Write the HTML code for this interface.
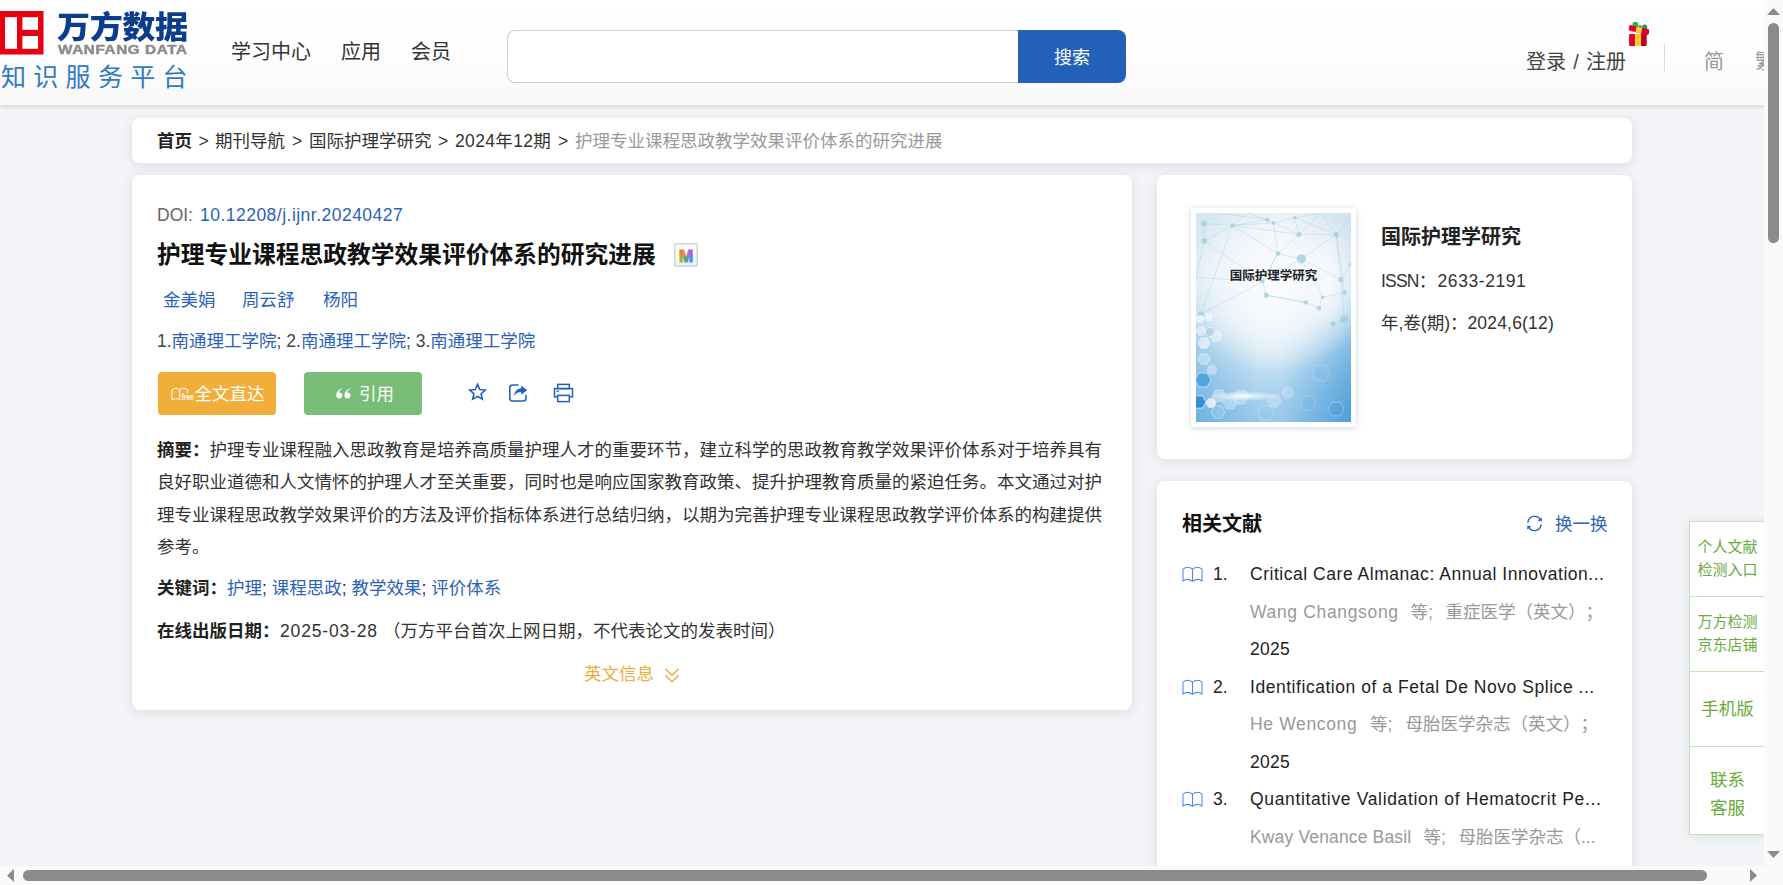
<!DOCTYPE html>
<html lang="zh-CN">
<head>
<meta charset="utf-8">
<title>护理专业课程思政教学效果评价体系的研究进展</title>
<style>
*{box-sizing:border-box;margin:0;padding:0}
html,body{width:1783px;height:885px;overflow:hidden}
body{text-spacing-trim:space-all;background:#f2f4f8;font-family:"Liberation Sans","Noto Sans CJK SC",sans-serif;font-size:17.5px;color:#333;position:relative}
a{text-decoration:none;color:inherit}
.abs{position:absolute}
/* header */
#hdr{position:absolute;left:0;top:0;width:1764px;height:105px;background:linear-gradient(#ffffff 0%,#fefefe 45%,#f8f8f8 100%);box-shadow:0 1px 5px rgba(40,50,65,.2)}
.nav{position:absolute;top:39px;font-size:20px;line-height:26px;color:#333;white-space:nowrap}
#sbox{position:absolute;left:507px;top:30px;width:512px;height:53px;border:1px solid #cfcfcf;border-right:none;border-radius:8px 0 0 8px;background:#fff}
#sbtn{position:absolute;left:1018px;top:30px;width:108px;height:53px;background:#2260b9;border-radius:0 8px 8px 0;color:#fff;font-size:18px;line-height:56px;text-align:center}
/* cards */
.card{position:absolute;background:#fff;border-radius:8px;box-shadow:0 2px 12px rgba(0,0,0,.1)}
.t{position:absolute;white-space:nowrap;line-height:26px}
.blue{color:#2b62b8}
.b{font-weight:bold}
.rl{color:#222}.yr{letter-spacing:.3px}.rg{color:#999}
/* scrollbars */
#vsb{position:absolute;left:1764px;top:0;width:19px;height:866px;background:#fafafa}
#hsb{position:absolute;left:0;top:866px;width:1783px;height:19px;background:#fafafa}
.thumb{position:absolute;background:#8b8b8b;border-radius:6px}
</style>
</head>
<body>

<!-- HEADER -->
<div id="hdr">
  <!-- logo -->
  <svg class="abs" style="left:0;top:11px" width="44" height="44" viewBox="0 0 44 44">
    <rect x="0" y="0" width="43.5" height="43.5" fill="#e60012"/>
    <rect x="5" y="6.2" width="12" height="31.6" fill="#fff"/>
    <rect x="22.4" y="6.2" width="15.6" height="12.6" fill="#fff"/>
    <rect x="22.4" y="25" width="15.6" height="12.8" fill="#fff"/>
  </svg>
  <div class="t" id="lg1" style="left:56.5px;top:10.6px;font-size:33px;line-height:36px;font-weight:900;color:#0c3c8c;letter-spacing:-.5px;transform:scale(1.005,.925);transform-origin:0 0">万方数据</div>
  <div class="t" id="lg2" style="left:57.5px;top:42.2px;font-size:13px;line-height:16px;font-weight:bold;color:#8c8c8c;letter-spacing:.55px;-webkit-text-stroke:.5px #8c8c8c;transform:scaleX(1.17);transform-origin:0 0">WANFANG DATA</div>
  <div class="t" id="lg3" style="left:1px;top:62px;font-size:25px;line-height:30px;color:#2f7ac3;letter-spacing:7.3px">知识服务平台</div>

  <div class="nav" style="left:231px">学习中心</div>
  <div class="nav" style="left:341px">应用</div>
  <div class="nav" style="left:411px">会员</div>

  <div id="sbox"></div>
  <div id="sbtn">搜索</div>

  <div class="t" id="login" style="left:1526px;top:48.5px;font-size:20px;color:#444;word-spacing:1.65px">登录 / 注册</div>
<svg class="abs" style="left:1626px;top:20px" width="26" height="28" viewBox="0 0 26 28">
    <circle cx="9.4" cy="4.7" r="3" fill="#1db954"/><circle cx="18.7" cy="7.2" r="2.6" fill="#12a350"/><circle cx="14" cy="6.6" r="1.6" fill="#16a850"/>
    <rect x="3.1" y="14" width="8.9" height="12" rx="1.2" fill="#e60026"/><rect x="12" y="14" width="8.7" height="12" rx="1.2" fill="#c1001f"/>
    <rect x="8.9" y="14" width="6.1" height="12" fill="#fdd835"/><rect x="10.8" y="14" width="2.3" height="12" fill="#fbc02d"/>
    <g transform="rotate(14 13 10)"><rect x="2.6" y="7.2" width="20.6" height="5.6" rx="1.8" fill="#e8002a"/><rect x="13" y="7.2" width="10.2" height="5.6" rx="1.8" fill="#d80025"/><rect x="10" y="7.2" width="5.8" height="5.6" fill="#fdd02f"/></g>
  </svg>
  <div class="abs" style="left:1664px;top:44px;width:1px;height:29px;background:#dcdcdc"></div>
  <div class="t" style="left:1704px;top:48.5px;font-size:20px;color:#999">简</div>
  <div class="t" style="left:1755px;top:48.5px;font-size:20px;color:#999;width:9px;overflow:hidden">繁</div>
</div>

<!-- BREADCRUMB -->
<div class="card" style="left:132px;top:118px;width:1500px;height:45px"></div>
<div class="t b bc" style="left:157px;top:128px;color:#222">首页</div>
<div class="t bc" style="left:198.5px;top:128px">&gt;</div>
<div class="t bc" style="left:215px;top:128px">期刊导航</div>
<div class="t bc" style="left:292px;top:128px">&gt;</div>
<div class="t bc" style="left:309px;top:128px">国际护理学研究</div>
<div class="t bc" style="left:438px;top:128px">&gt;</div>
<div class="t bc" id="bcy" style="left:455px;top:128px;letter-spacing:0.35px">2024年12期</div>
<div class="t bc" style="left:558px;top:128px">&gt;</div>
<div class="t bc" style="left:575px;top:128px;color:#999">护理专业课程思政教学效果评价体系的研究进展</div>

<!-- MAIN CARD -->
<div class="card" style="left:132px;top:175px;width:1000px;height:535px"></div>
<div class="t" id="doi" style="left:157px;top:202px"><span style="color:#666">DOI:</span><span class="blue" id="doin" style="position:absolute;left:43px;top:0;letter-spacing:0.48px">10.12208/j.ijnr.20240427</span></div>
<div class="t b" id="title" style="left:157px;top:240px;font-size:23.75px;line-height:30px;color:#111">护理专业课程思政教学效果评价体系的研究进展</div>
<!-- M icon -->
<svg class="abs" style="left:674px;top:243px" width="24" height="24" viewBox="0 0 24 24">
  <defs>
    <linearGradient id="mbg" x1="0" y1="0" x2="0" y2="1"><stop offset="0" stop-color="#fff"/><stop offset="1" stop-color="#e9f0fa"/></linearGradient>
    <linearGradient id="ml" x1="0" y1="0" x2="0" y2="1"><stop offset="0" stop-color="#f8781a"/><stop offset=".45" stop-color="#e98a2a"/><stop offset=".6" stop-color="#8fc63a"/><stop offset="1" stop-color="#86c140"/></linearGradient>
    <linearGradient id="mr" x1="0" y1="0" x2="0" y2="1"><stop offset="0" stop-color="#b458d8"/><stop offset=".4" stop-color="#9a6ae0"/><stop offset=".6" stop-color="#3f9be8"/><stop offset="1" stop-color="#3a9ce9"/></linearGradient>
    <linearGradient id="mm" x1="0" y1="0" x2="0" y2="1"><stop offset="0" stop-color="#e2705a"/><stop offset=".4" stop-color="#c98a6a"/><stop offset=".6" stop-color="#55a08c"/><stop offset="1" stop-color="#4c9c94"/></linearGradient>
    <clipPath id="mcl"><rect x="0" y="0" width="9.3" height="24"/></clipPath>
    <clipPath id="mcm"><rect x="9.3" y="0" width="5" height="24"/></clipPath>
    <clipPath id="mcr"><rect x="14.3" y="0" width="10" height="24"/></clipPath>
  </defs>
  <rect x=".75" y=".75" width="22.5" height="22.5" rx="2" fill="url(#mbg)" stroke="#d3d4d6" stroke-width="1.5"/>
  <g font-family="Liberation Sans,sans-serif" font-weight="bold" font-size="17" text-anchor="middle">
    <text x="12" y="19" fill="url(#ml)" stroke="url(#ml)" stroke-width="1.2" clip-path="url(#mcl)">M</text>
    <text x="12" y="19" fill="url(#mm)" stroke="url(#mm)" stroke-width="1.2" clip-path="url(#mcm)">M</text>
    <text x="12" y="19" fill="url(#mr)" stroke="url(#mr)" stroke-width="1.2" clip-path="url(#mcr)">M</text>
  </g>
</svg>
<div class="t blue" id="au1" style="left:163px;top:287px">金美娟</div>
<div class="t blue" id="au2" style="left:242px;top:287px">周云舒</div>
<div class="t blue" id="au3" style="left:323px;top:287px">杨阳</div>
<div class="t" id="aff" style="left:157px;top:328px;color:#444">1.<span class="blue">南通理工学院</span>; 2.<span class="blue">南通理工学院</span>; 3.<span class="blue">南通理工学院</span></div>

<div class="abs" id="btn1" style="left:158px;top:372px;width:118px;height:43px;background:#f1ae3b;border-radius:4px"></div>
<svg class="abs" style="left:171px;top:387px" width="24" height="15" viewBox="0 0 24 15" fill="none" stroke="#fff" stroke-width="1" stroke-linejoin="round">
  <path d="M1 2.6 Q4.6 -.4 8.7 2.6 Q12.8 -.4 16.4 2.6 L16.4 6 M8.7 2.6 L8.7 11.2 M1 2.6 L1 13 Q4.6 10.2 8.7 12.4 L9.8 12.2"/>
  <text x="10.4" y="13.4" font-family="Liberation Sans,sans-serif" font-size="8.8" font-weight="bold" fill="#fff" stroke="none" textLength="12.2" lengthAdjust="spacingAndGlyphs">free</text>
</svg>
<div class="t" id="btn1t" style="left:194.5px;top:380.5px;color:#fff">全文直达</div>
<div class="abs" id="btn2" style="left:304px;top:372px;width:118px;height:43px;background:#78be79;border-radius:4px"></div>
<svg class="abs" style="left:336px;top:388px" width="15" height="11" viewBox="0 0 15 11" fill="#fff">
  <path d="M6.2 0.2 C3 1.2 .3 3.9 .3 7.2 A3 3 0 1 0 3.3 4.4 C3.0 4.4 2.9 4.4 2.7 4.5 C3.2 2.9 4.6 1.8 6.4 1.1Z"/>
  <path d="M14.4 0.2 C11.2 1.2 8.5 3.9 8.5 7.2 A3 3 0 1 0 11.5 4.4 C11.2 4.4 11.1 4.4 10.9 4.5 C11.4 2.9 12.8 1.8 14.6 1.1Z"/>
</svg>
<div class="t" id="btn2t" style="left:359px;top:381px;color:#fff">引用</div>
<!-- star -->
<svg class="abs" style="left:467px;top:381px" width="21" height="21" viewBox="0 0 21 21" fill="none" stroke="#2260b9" stroke-width="1.7" stroke-linejoin="miter">
  <path transform="translate(10.5 10.8) scale(.95) translate(-10.5 -10.4)" d="M10.5 2.6 L12.9 8.0 L18.7 8.55 L14.3 12.45 L15.55 18.2 L10.5 15.2 L5.45 18.2 L6.7 12.45 L2.3 8.55 L8.1 8.0 Z"/>
</svg>
<!-- share -->
<svg class="abs" style="left:508px;top:383px" width="20" height="20" viewBox="0 0 20 20" fill="none" stroke="#2260b9" stroke-width="1.6" stroke-linecap="round">
  <path d="M10 2 H4.6 Q1.8 2 1.8 4.8 V15.2 Q1.8 18 4.6 18 H15.2 Q18 18 18 15.2 V12.6"/>
  <path d="M13.2 2.4 L19.2 7.2 L13.2 11.8 V9 C9.7 9 7.7 10.3 6.2 13 C6.6 8.3 9.3 5.5 13.2 5.3Z" fill="#2260b9" stroke="none"/>
</svg>
<!-- print -->
<svg class="abs" style="left:553px;top:383px" width="21" height="20" viewBox="0 0 21 20" fill="none" stroke="#2260b9" stroke-width="1.5">
  <rect x="4.7" y="1.4" width="11.6" height="4.2"/>
  <rect x="1.5" y="5.6" width="18" height="8.3"/>
  <rect x="4.7" y="12.4" width="11.6" height="6.2" fill="#fff"/>
  <rect x="3.4" y="7.6" width="2.6" height="1.2" fill="#2260b9" stroke="none"/>
</svg>

<div class="abs" id="abst" style="left:157px;top:433.5px;width:950px;line-height:32.5px;color:#333;text-align:left"><span class="b" style="color:#222">摘要：</span>护理专业课程融入思政教育是培养高质量护理人才的重要环节，建立科学的思政教育教学效果评价体系对于培养具有<br>良好职业道德和人文情怀的护理人才至关重要，同时也是响应国家教育政策、提升护理教育质量的紧迫任务。本文通过对护<br>理专业课程思政教学效果评价的方法及评价指标体系进行总结归纳，以期为完善护理专业课程思政教学评价体系的构建提供<br>参考。</div>
<div class="t" id="kw" style="left:157px;top:575px"><span class="b" style="color:#222">关键词：</span><span class="blue">护理</span>; <span class="blue">课程思政</span>; <span class="blue">教学效果</span>; <span class="blue">评价体系</span></div>
<div class="t" id="dt" style="left:157px;top:618px"><span class="b" style="color:#222">在线出版日期：</span><span id="dtv" style="position:absolute;left:123px;top:0;letter-spacing:0.84px">2025-03-28</span><span id="dtn" style="position:absolute;left:226px;top:0">（万方平台首次上网日期，不代表论文的发表时间）</span></div>
<div class="t" id="eng" style="left:584px;top:660.7px;color:#f0ad3c">英文信息</div>
<svg class="abs" style="left:664px;top:667px" width="16" height="16" viewBox="0 0 16 16" fill="none" stroke="#f0ad3c" stroke-width="1.5" stroke-linecap="round" stroke-linejoin="round"><path d="M1.8 2.3 L8 8.2 L14.2 2.3"/><path d="M1.8 8.8 L8 14.8 L14.2 8.8"/></svg>

<!-- RIGHT CARDS -->
<div class="card" style="left:1157px;top:175px;width:475px;height:284px"></div>
<!-- cover -->
<div class="abs" style="left:1191px;top:208px;width:165px;height:219px;background:#fff;box-shadow:0 1px 6px rgba(120,140,170,.35)"></div>
<svg class="abs" id="cover" style="left:1196px;top:213px" width="155" height="209" viewBox="0 0 155 209">
  <defs>
    <linearGradient id="cg" x1="0" y1="0" x2="0" y2="1">
      <stop offset="0" stop-color="#e1ecf3"/><stop offset=".25" stop-color="#eef3f9"/><stop offset=".48" stop-color="#eaf2f9"/><stop offset=".68" stop-color="#cde4f3"/><stop offset=".85" stop-color="#acd3ee"/><stop offset="1" stop-color="#98c9ea"/>
    </linearGradient>
    <radialGradient id="cw3" cx=".5" cy=".5" r=".5"><stop offset="0" stop-color="#fbfcfe" stop-opacity=".95"/><stop offset=".5" stop-color="#f8fafd" stop-opacity=".75"/><stop offset="1" stop-color="#fff" stop-opacity="0"/></radialGradient>
    <radialGradient id="cw2" cx=".5" cy=".5" r=".5"><stop offset="0" stop-color="#fff" stop-opacity=".95"/><stop offset="1" stop-color="#fff" stop-opacity="0"/></radialGradient>
    <linearGradient id="cr" x1="0" y1="0" x2="1" y2="0"><stop offset="0" stop-color="#4a9fd9" stop-opacity=".55"/><stop offset=".4" stop-color="#4a9fd9" stop-opacity="0"/><stop offset=".55" stop-color="#3f97d6" stop-opacity="0"/><stop offset="1" stop-color="#3f97d6" stop-opacity=".85"/></linearGradient>
    <linearGradient id="cmg" x1="0" y1="0" x2="0" y2="1"><stop offset="0" stop-color="#fff" stop-opacity=".12"/><stop offset=".35" stop-color="#fff" stop-opacity=".2"/><stop offset=".7" stop-color="#fff" stop-opacity=".7"/><stop offset="1" stop-color="#fff" stop-opacity="1"/></linearGradient>
    <mask id="cm"><rect width="155" height="209" fill="url(#cmg)"/></mask>
    <clipPath id="cc"><rect width="155" height="209"/></clipPath>
  </defs>
  <g clip-path="url(#cc)">
  <rect width="155" height="209" fill="url(#cg)"/>
  <rect width="155" height="209" fill="url(#cr)" mask="url(#cm)"/>
  <ellipse cx="82" cy="72" rx="92" ry="88" fill="url(#cw3)"/>
  <ellipse cx="132" cy="70" rx="22" ry="50" fill="url(#cw2)" opacity=".5"/>
  <ellipse cx="48" cy="183" rx="36" ry="5" fill="url(#cw2)"/>
  <g stroke="#8fc3d0" stroke-opacity=".42" stroke-width=".7" fill="none"><path d="M7.8 10.4 L36.4 12.5"/><path d="M7.8 10.4 L8.3 28.1"/><path d="M8.3 28.1 L36.4 12.5"/><path d="M36.4 12.5 L71.5 6.8"/><path d="M36.4 12.5 L77.5 9.9"/><path d="M36.4 12.5 L81.9 40.6"/><path d="M36.4 12.5 L103.0 21.3"/><path d="M71.5 6.8 L77.5 9.9"/><path d="M77.5 9.9 L81.9 40.6"/><path d="M77.5 9.9 L103.0 21.3"/><path d="M77.5 9.9 L98.8 4.7"/><path d="M81.9 40.6 L103.0 21.3"/><path d="M81.9 40.6 L105.3 45.8"/><path d="M103.0 21.3 L140.4 21.6"/><path d="M103.0 21.3 L98.8 4.7"/><path d="M105.3 45.8 L140.4 21.6"/><path d="M105.3 45.8 L144.8 66.6"/><path d="M105.3 45.8 L126.6 84.2"/><path d="M98.8 4.7 L140.4 21.6"/><path d="M140.4 21.6 L154.2 4.7"/><path d="M140.4 21.6 L124.8 0.0"/><path d="M140.4 21.6 L144.8 66.6"/><path d="M144.8 66.6 L148.7 79.6"/><path d="M144.8 66.6 L154.2 51.5"/><path d="M148.7 79.6 L126.6 84.2"/><path d="M126.6 84.2 L123.0 95.2"/><path d="M123.0 95.2 L109.7 89.4"/><path d="M109.7 89.4 L70.2 82.2"/><path d="M70.2 82.2 L66.6 68.4"/><path d="M66.6 68.4 L81.9 40.6"/><path d="M8.3 28.1 L66.6 68.4"/><path d="M8.3 28.1 L0.0 64.5"/><path d="M0.0 64.5 L66.6 68.4"/><path d="M4.7 101.4 L66.6 68.4"/><path d="M4.7 101.4 L36.4 12.5"/><path d="M52.0 0.0 L36.4 12.5"/><path d="M52.0 0.0 L71.5 6.8"/><path d="M23.4 0.0 L71.5 6.8"/><path d="M23.4 0.0 L7.8 10.4"/><path d="M124.8 0.0 L98.8 4.7"/><path d="M124.8 0.0 L103.0 21.3"/><path d="M81.9 40.6 L66.6 68.4"/><path d="M105.3 45.8 L66.6 68.4"/><path d="M70.2 82.2 L109.7 89.4"/><path d="M148.2 106.6 L144.8 66.6"/><path d="M137.0 110.8 L148.2 106.6"/><path d="M148.7 79.6 L140.4 21.6"/></g>
  <g fill="#9bcdd8" fill-opacity=".7"><circle cx="7.8" cy="10.4" r="2.8"/><circle cx="8.3" cy="28.1" r="2.8"/><circle cx="36.4" cy="12.5" r="2.2"/><circle cx="71.5" cy="6.8" r="2.2"/><circle cx="77.5" cy="9.9" r="1.8"/><circle cx="81.9" cy="40.6" r="2.4"/><circle cx="103.0" cy="21.3" r="2.6"/><circle cx="105.3" cy="45.8" r="4.6"/><circle cx="140.4" cy="21.6" r="2.6"/><circle cx="98.8" cy="4.7" r="1.8"/><circle cx="70.2" cy="82.2" r="2.6"/><circle cx="109.7" cy="89.4" r="2.2"/><circle cx="123.0" cy="95.2" r="2.4"/><circle cx="126.6" cy="84.2" r="1.8"/><circle cx="66.6" cy="68.4" r="2.0"/><circle cx="4.7" cy="101.4" r="2.8"/><circle cx="144.8" cy="66.6" r="2.6"/><circle cx="148.7" cy="79.6" r="2.4"/><circle cx="137.0" cy="110.8" r="2.6"/><circle cx="148.2" cy="106.6" r="4.0"/><circle cx="154.2" cy="51.5" r="1.6"/></g>
  <path d="M14.0 130.0 L11.0 135.2 L5.0 135.2 L2.0 130.0 L5.0 124.8 L11.0 124.8Z" fill="#fff" fill-opacity="0.55" stroke="#fff" stroke-opacity="0.7000000000000001" stroke-width=".6"/><path d="M26.0 123.0 L23.0 128.2 L17.0 128.2 L14.0 123.0 L17.0 117.8 L23.0 117.8Z" fill="#fff" fill-opacity="0.4" stroke="#fff" stroke-opacity="0.55" stroke-width=".6"/><path d="M19.0 119.0 L16.5 123.3 L11.5 123.3 L9.0 119.0 L11.5 114.7 L16.5 114.7Z" fill="#a9cdea" fill-opacity="0.6" stroke="#fff" stroke-opacity="0.75" stroke-width=".6"/><path d="M10.0 118.0 L7.5 122.3 L2.5 122.3 L0.0 118.0 L2.5 113.7 L7.5 113.7Z" fill="#fff" fill-opacity="0.5" stroke="#fff" stroke-opacity="0.65" stroke-width=".6"/><path d="M14.0 146.0 L11.0 151.2 L5.0 151.2 L2.0 146.0 L5.0 140.8 L11.0 140.8Z" fill="#cfe4f4" fill-opacity="0.6" stroke="#fff" stroke-opacity="0.75" stroke-width=".6"/><path d="M21.0 157.0 L18.5 161.3 L13.5 161.3 L11.0 157.0 L13.5 152.7 L18.5 152.7Z" fill="#fff" fill-opacity="0.35" stroke="#fff" stroke-opacity="0.5" stroke-width=".6"/><path d="M15.0 167.0 L11.0 173.9 L3.0 173.9 L-1.0 167.0 L3.0 160.1 L11.0 160.1Z" fill="#3f9ad9" fill-opacity="0.75" stroke="#fff" stroke-opacity="0.9" stroke-width=".6"/><path d="M10.0 189.0 L6.5 195.1 L-0.5 195.1 L-4.0 189.0 L-0.5 182.9 L6.5 182.9Z" fill="#2b86cf" fill-opacity="0.85" stroke="#fff" stroke-opacity="1" stroke-width=".6"/><path d="M20.0 190.0 L17.5 194.3 L12.5 194.3 L10.0 190.0 L12.5 185.7 L17.5 185.7Z" fill="#fff" fill-opacity="0.7" stroke="#fff" stroke-opacity="0.85" stroke-width=".6"/><path d="M30.0 183.0 L26.5 189.1 L19.5 189.1 L16.0 183.0 L19.5 176.9 L26.5 176.9Z" fill="#fff" fill-opacity="0.35" stroke="#fff" stroke-opacity="0.5" stroke-width=".6"/><path d="M41.0 190.0 L37.5 196.1 L30.5 196.1 L27.0 190.0 L30.5 183.9 L37.5 183.9Z" fill="#fff" fill-opacity="0.3" stroke="#fff" stroke-opacity="0.44999999999999996" stroke-width=".6"/><path d="M29.0 199.0 L25.5 205.1 L18.5 205.1 L15.0 199.0 L18.5 192.9 L25.5 192.9Z" fill="#9ccbed" fill-opacity="0.5" stroke="#fff" stroke-opacity="0.65" stroke-width=".6"/><path d="M53.0 184.0 L49.0 190.9 L41.0 190.9 L37.0 184.0 L41.0 177.1 L49.0 177.1Z" fill="#fff" fill-opacity="0.25" stroke="#fff" stroke-opacity="0.4" stroke-width=".6"/><path d="M85.0 188.0 L81.5 194.1 L74.5 194.1 L71.0 188.0 L74.5 181.9 L81.5 181.9Z" fill="#fff" fill-opacity="0.22" stroke="#fff" stroke-opacity="0.37" stroke-width=".6"/><path d="M98.0 180.0 L95.0 185.2 L89.0 185.2 L86.0 180.0 L89.0 174.8 L95.0 174.8Z" fill="#fff" fill-opacity="0.2" stroke="#fff" stroke-opacity="0.35" stroke-width=".6"/><path d="M78.0 200.0 L74.0 206.9 L66.0 206.9 L62.0 200.0 L66.0 193.1 L74.0 193.1Z" fill="#8fc4ea" fill-opacity="0.35" stroke="#fff" stroke-opacity="0.5" stroke-width=".6"/><path d="M134.0 160.0 L129.5 167.8 L120.5 167.8 L116.0 160.0 L120.5 152.2 L129.5 152.2Z" fill="#7fbbe6" fill-opacity="0.25" stroke="#fff" stroke-opacity="0.4" stroke-width=".6"/><path d="M148.0 196.0 L144.0 202.9 L136.0 202.9 L132.0 196.0 L136.0 189.1 L144.0 189.1Z" fill="#4a9bd8" fill-opacity="0.35" stroke="#fff" stroke-opacity="0.5" stroke-width=".6"/><path d="M120.0 190.0 L116.0 196.9 L108.0 196.9 L104.0 190.0 L108.0 183.1 L116.0 183.1Z" fill="#6fb3e3" fill-opacity="0.25" stroke="#fff" stroke-opacity="0.4" stroke-width=".6"/><path d="M8.0 106.0 L6.0 109.5 L2.0 109.5 L0.0 106.0 L2.0 102.5 L6.0 102.5Z" fill="#fff" fill-opacity="0.6" stroke="#fff" stroke-opacity="0.75" stroke-width=".6"/><path d="M17.0 104.0 L15.0 107.5 L11.0 107.5 L9.0 104.0 L11.0 100.5 L15.0 100.5Z" fill="#fff" fill-opacity="0.5" stroke="#fff" stroke-opacity="0.65" stroke-width=".6"/>
  </g>
  <text x="77.5" y="66.5" text-anchor="middle" font-family="Liberation Sans,Noto Sans CJK SC,sans-serif" font-weight="bold" font-size="12.5" fill="#222">国际护理学研究</text>
</svg>
<div class="t b" id="jn" style="left:1381px;top:224px;font-size:20px;color:#222">国际护理学研究</div>
<div class="t" id="issn" style="left:1381px;top:268px;color:#333"><span style="letter-spacing:-.8px">ISSN</span>：<span style="position:absolute;left:56.5px;top:0;letter-spacing:.58px">2633-2191</span></div>
<div class="t" id="yvp" style="left:1381px;top:310px;color:#333">年,卷(期)：<span style="position:absolute;left:86.4px;top:0;letter-spacing:.19px">2024,6(12)</span></div>

<div class="card" style="left:1157px;top:481px;width:475px;height:420px"></div>
<div class="t b" id="rel" style="left:1182px;top:511px;font-size:20px;color:#111">相关文献</div>
<svg class="abs" style="left:1526px;top:515px" width="17" height="17" viewBox="0 0 17 17" fill="none" stroke="#2260b9" stroke-width="1.35" stroke-linecap="round">
  <path d="M1.9 7.2 A6.7 6.7 0 0 1 14.6 5.2"/><path d="M15.1 9.8 A6.7 6.7 0 0 1 2.4 11.8"/>
  <path d="M15.9 2.4 L15.6 6.6 L11.6 5.4 Z" fill="#2260b9" stroke="none"/><path d="M1.1 14.6 L1.4 10.4 L5.4 11.6 Z" fill="#2260b9" stroke="none"/>
</svg>
<div class="t blue" id="hyh" style="left:1555px;top:511px">换一换</div>

<svg class="abs bk" style="left:1182px;top:566.2px" width="21" height="17" viewBox="0 0 21 17" fill="none" stroke="#4a8ae8" stroke-width="1.05" stroke-linejoin="round"><path d="M1 3.2 Q5.6 -.6 10.5 3.2 Q15.4 -.6 20 3.2 V15 Q15.4 11.6 10.5 15.4 Q5.6 11.6 1 15 Z M10.5 3.2 V15.4"/></svg>
<div class="t rl" style="left:1213px;top:561px">1.</div>
<div class="t rl rt" id="rt1" style="left:1250px;top:561px;letter-spacing:0.53px">Critical Care Almanac: Annual Innovation...</div>
<div class="t rg" id="rn1" style="left:1250px;top:599px;letter-spacing:0.66px">Wang Changsong</div><div class="t rg" style="left:1410.5px;top:599px">等;</div><div class="t rg" style="left:1445.5px;top:599px">重症医学（英文）；</div>
<div class="t rl yr" style="left:1250px;top:636px">2025</div>
<svg class="abs bk" style="left:1182px;top:679.2px" width="21" height="17" viewBox="0 0 21 17" fill="none" stroke="#4a8ae8" stroke-width="1.05" stroke-linejoin="round"><path d="M1 3.2 Q5.6 -.6 10.5 3.2 Q15.4 -.6 20 3.2 V15 Q15.4 11.6 10.5 15.4 Q5.6 11.6 1 15 Z M10.5 3.2 V15.4"/></svg>
<div class="t rl" style="left:1213px;top:674px">2.</div>
<div class="t rl rt" id="rt2" style="left:1250px;top:674px;letter-spacing:0.54px">Identification of a Fetal De Novo Splice ...</div>
<div class="t rg" id="rn2" style="left:1250px;top:711px;letter-spacing:0.65px">He Wencong</div><div class="t rg" style="left:1370px;top:711px">等;</div><div class="t rg" style="left:1405.5px;top:711px">母胎医学杂志（英文）；</div>
<div class="t rl yr" style="left:1250px;top:749px">2025</div>
<svg class="abs bk" style="left:1182px;top:791.2px" width="21" height="17" viewBox="0 0 21 17" fill="none" stroke="#4a8ae8" stroke-width="1.05" stroke-linejoin="round"><path d="M1 3.2 Q5.6 -.6 10.5 3.2 Q15.4 -.6 20 3.2 V15 Q15.4 11.6 10.5 15.4 Q5.6 11.6 1 15 Z M10.5 3.2 V15.4"/></svg>
<div class="t rl" style="left:1213px;top:786px">3.</div>
<div class="t rl rt" id="rt3" style="left:1250px;top:786px;letter-spacing:0.65px">Quantitative Validation of Hematocrit Pe...</div>
<div class="t rg" id="rn3" style="left:1250px;top:824px;letter-spacing:0.15px">Kway Venance Basil</div><div class="t rg" style="left:1423.5px;top:824px">等;</div><div class="t rg" style="left:1458.5px;top:824px">母胎医学杂志（<span id="el3">...</span></div>

<!-- side panel -->
<div class="abs" id="side" style="left:1689px;top:521px;width:90px;height:314px;background:#fff;border:1px solid #c9e3b5;color:#6aab3c;text-align:center;box-shadow:0 1px 10px rgba(0,0,0,.09)">
  <div style="height:75px;border-bottom:1px solid #c9e3b5;font-size:15px;line-height:22.5px;padding-top:14px;width:75px">个人文献<br>检测入口</div>
  <div style="height:75px;border-bottom:1px solid #c9e3b5;font-size:15px;line-height:22.5px;padding-top:14px;width:75px">万方检测<br>京东店铺</div>
  <div style="height:75px;border-bottom:1px solid #c9e3b5;font-size:17.5px;line-height:74px;width:75px">手机版</div>
  <div style="height:87px;font-size:17.5px;line-height:27.5px;padding-top:20px;width:75px">联系<br>客服</div>
</div>

<!-- SCROLLBARS -->
<div id="vsb">
  <svg class="abs" style="left:3px;top:8px" width="13" height="7" viewBox="0 0 13 7"><path d="M0 7 L6.5 0 L13 7Z" fill="#8b8b8b"/></svg>
  <div class="thumb" style="left:4px;top:23px;width:11px;height:220px"></div>
  <svg class="abs" style="left:3px;top:851px" width="13" height="7" viewBox="0 0 13 7"><path d="M0 0 L6.5 7 L13 0Z" fill="#8b8b8b"/></svg>
</div>
<div id="hsb">
  <svg class="abs" style="left:7px;top:3px" width="7" height="13" viewBox="0 0 7 13"><path d="M7 0 L0 6.5 L7 13Z" fill="#8b8b8b"/></svg>
  <div class="thumb" style="left:23px;top:4px;width:1684px;height:11px"></div>
  <svg class="abs" style="left:1750px;top:3px" width="7" height="13" viewBox="0 0 7 13"><path d="M0 0 L7 6.5 L0 13Z" fill="#8b8b8b"/></svg>
</div>
</body>
</html>
